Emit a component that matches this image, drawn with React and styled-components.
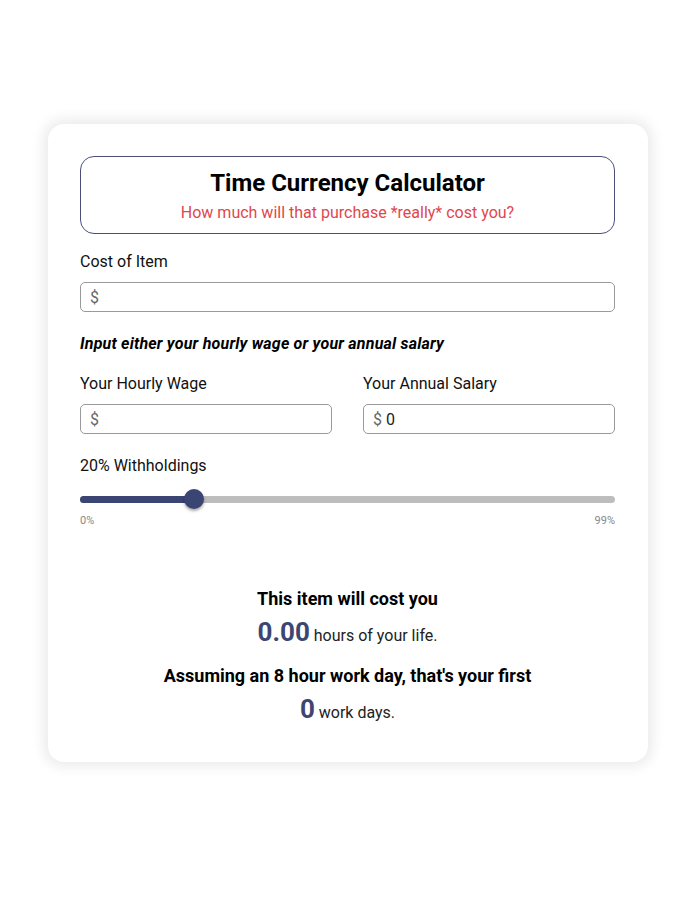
import React, { useState } from "react";
import styled, { createGlobalStyle } from "styled-components";

const GlobalStyle = createGlobalStyle`
  body {
    margin: 0;
    background: #ffffff;
    font-family: Roboto, "Liberation Sans", sans-serif;
    color: #111;
  }
`;

export default function App() {
  const [withholding, setWithholding] = useState(20);
  const ratio = withholding / 99;
  const thumbAt = `calc(10px + (100% - 20px) * ${ratio})`;

  return (
    <>
      <GlobalStyle />
      <Page>
        <Card>
          <Header>
            <h1>Time Currency Calculator</h1>
            <p>How much will that purchase *really* cost you?</p>
          </Header>

          <Field>
            <Label>Cost of Item</Label>
            <InputBox>
              <span>$</span>
              <input type="text" />
            </InputBox>
          </Field>

          <Note>Input either your hourly wage or your annual salary</Note>

          <Row>
            <Field>
              <Label>Your Hourly Wage</Label>
              <InputBox>
                <span>$</span>
                <input type="text" />
              </InputBox>
            </Field>
            <Field>
              <Label>Your Annual Salary</Label>
              <InputBox>
                <span>$</span>
                <input type="text" defaultValue="0" />
              </InputBox>
            </Field>
          </Row>

          <Field $gap={22}>
            <Label>{withholding}% Withholdings</Label>
            <Slider>
              <Track>
                <Fill style={{ width: thumbAt }} />
                <Thumb style={{ left: thumbAt }} />
              </Track>
              <input
                type="range"
                min="0"
                max="99"
                value={withholding}
                onChange={(e) => setWithholding(Number(e.target.value))}
              />
            </Slider>
            <Scale>
              <span>0%</span>
              <span>99%</span>
            </Scale>
          </Field>

          <Results>
            <ResultTitle>This item will cost you</ResultTitle>
            <ResultLine>
              <strong>0.00</strong> hours of your life.
            </ResultLine>
            <ResultTitle>Assuming an 8 hour work day, that's your first</ResultTitle>
            <ResultLine>
              <strong>0</strong> work days.
            </ResultLine>
          </Results>
        </Card>
      </Page>
    </>
  );
}

const Page = styled.div`
  padding: 124px 0 100px 48px;
`;

const Card = styled.div`
  width: 600px;
  box-sizing: border-box;
  padding: 32px 33px 20px 32px;
  background: #fff;
  border-radius: 16px;
  box-shadow: 0 0 14px 4px rgba(0, 0, 0, 0.09);
  display: flex;
  flex-direction: column;
`;

const Header = styled.div`
  border: 1px solid #4a4f7a;
  border-radius: 14px;
  padding: 12px 16px 10px;
  text-align: center;

  h1 {
    margin: 0;
    font-size: 24px;
    font-weight: 700;
    line-height: 28px;
    color: #000;
  }

  p {
    margin: 6px 0 0;
    font-size: 16px;
    line-height: 20px;
    color: #e0474c;
  }
`;

const Field = styled.div`
  display: flex;
  flex-direction: column;
  flex: 1;
  margin-top: ${(p) => p.$gap ?? 18}px;
`;

const Label = styled.label`
  font-size: 16px;
  line-height: 20px;
  color: #111;
  margin-bottom: 10px;
`;

const InputBox = styled.div`
  display: flex;
  align-items: center;
  height: 30px;
  box-sizing: border-box;
  border: 1px solid #9a9a9a;
  border-radius: 5px;
  padding: 0 9px;
  font-size: 16px;
  color: #666;

  span {
    margin-right: 4px;
  }

  input {
    flex: 1;
    border: none;
    outline: none;
    background: transparent;
    font-family: inherit;
    font-size: 16px;
    color: #222;
    padding: 0;
  }
`;

const Note = styled.p`
  margin: 22px 0 2px;
  font-size: 16px;
  line-height: 20px;
  font-weight: 700;
  font-style: italic;
  letter-spacing: 0.2px;
  color: #000;
`;

const Row = styled.div`
  display: flex;
  gap: 31px;
`;

const Slider = styled.div`
  position: relative;
  height: 20px;
  margin-top: 3px;
  display: flex;
  align-items: center;

  input {
    position: absolute;
    inset: 0;
    width: 100%;
    margin: 0;
    opacity: 0;
    cursor: pointer;
  }
`;

const Track = styled.div`
  position: relative;
  width: 100%;
  height: 7px;
  border-radius: 4px;
  background: #bdbdbd;
`;

const Fill = styled.div`
  height: 100%;
  border-radius: 4px;
  background: #3b4574;
`;

const Thumb = styled.div`
  position: absolute;
  top: 50%;
  width: 20px;
  height: 20px;
  border-radius: 50%;
  background: #3b4574;
  transform: translate(-50%, -50%);
  box-shadow: 0 2px 3px rgba(0, 0, 0, 0.35);
`;

const Scale = styled.div`
  display: flex;
  justify-content: space-between;
  margin-top: 5px;
  font-size: 11px;
  color: #888;
`;

const Results = styled.div`
  margin-top: 61px;
  text-align: center;
`;

const ResultTitle = styled.div`
  font-size: 18px;
  font-weight: 700;
  line-height: 22px;
  color: #000;
`;

const ResultLine = styled.div`
  font-size: 16px;
  line-height: 34px;
  color: #222;
  margin: 5px 0 12px;

  strong {
    font-size: 26px;
    font-weight: 700;
    color: #3d4573;
  }
`;
